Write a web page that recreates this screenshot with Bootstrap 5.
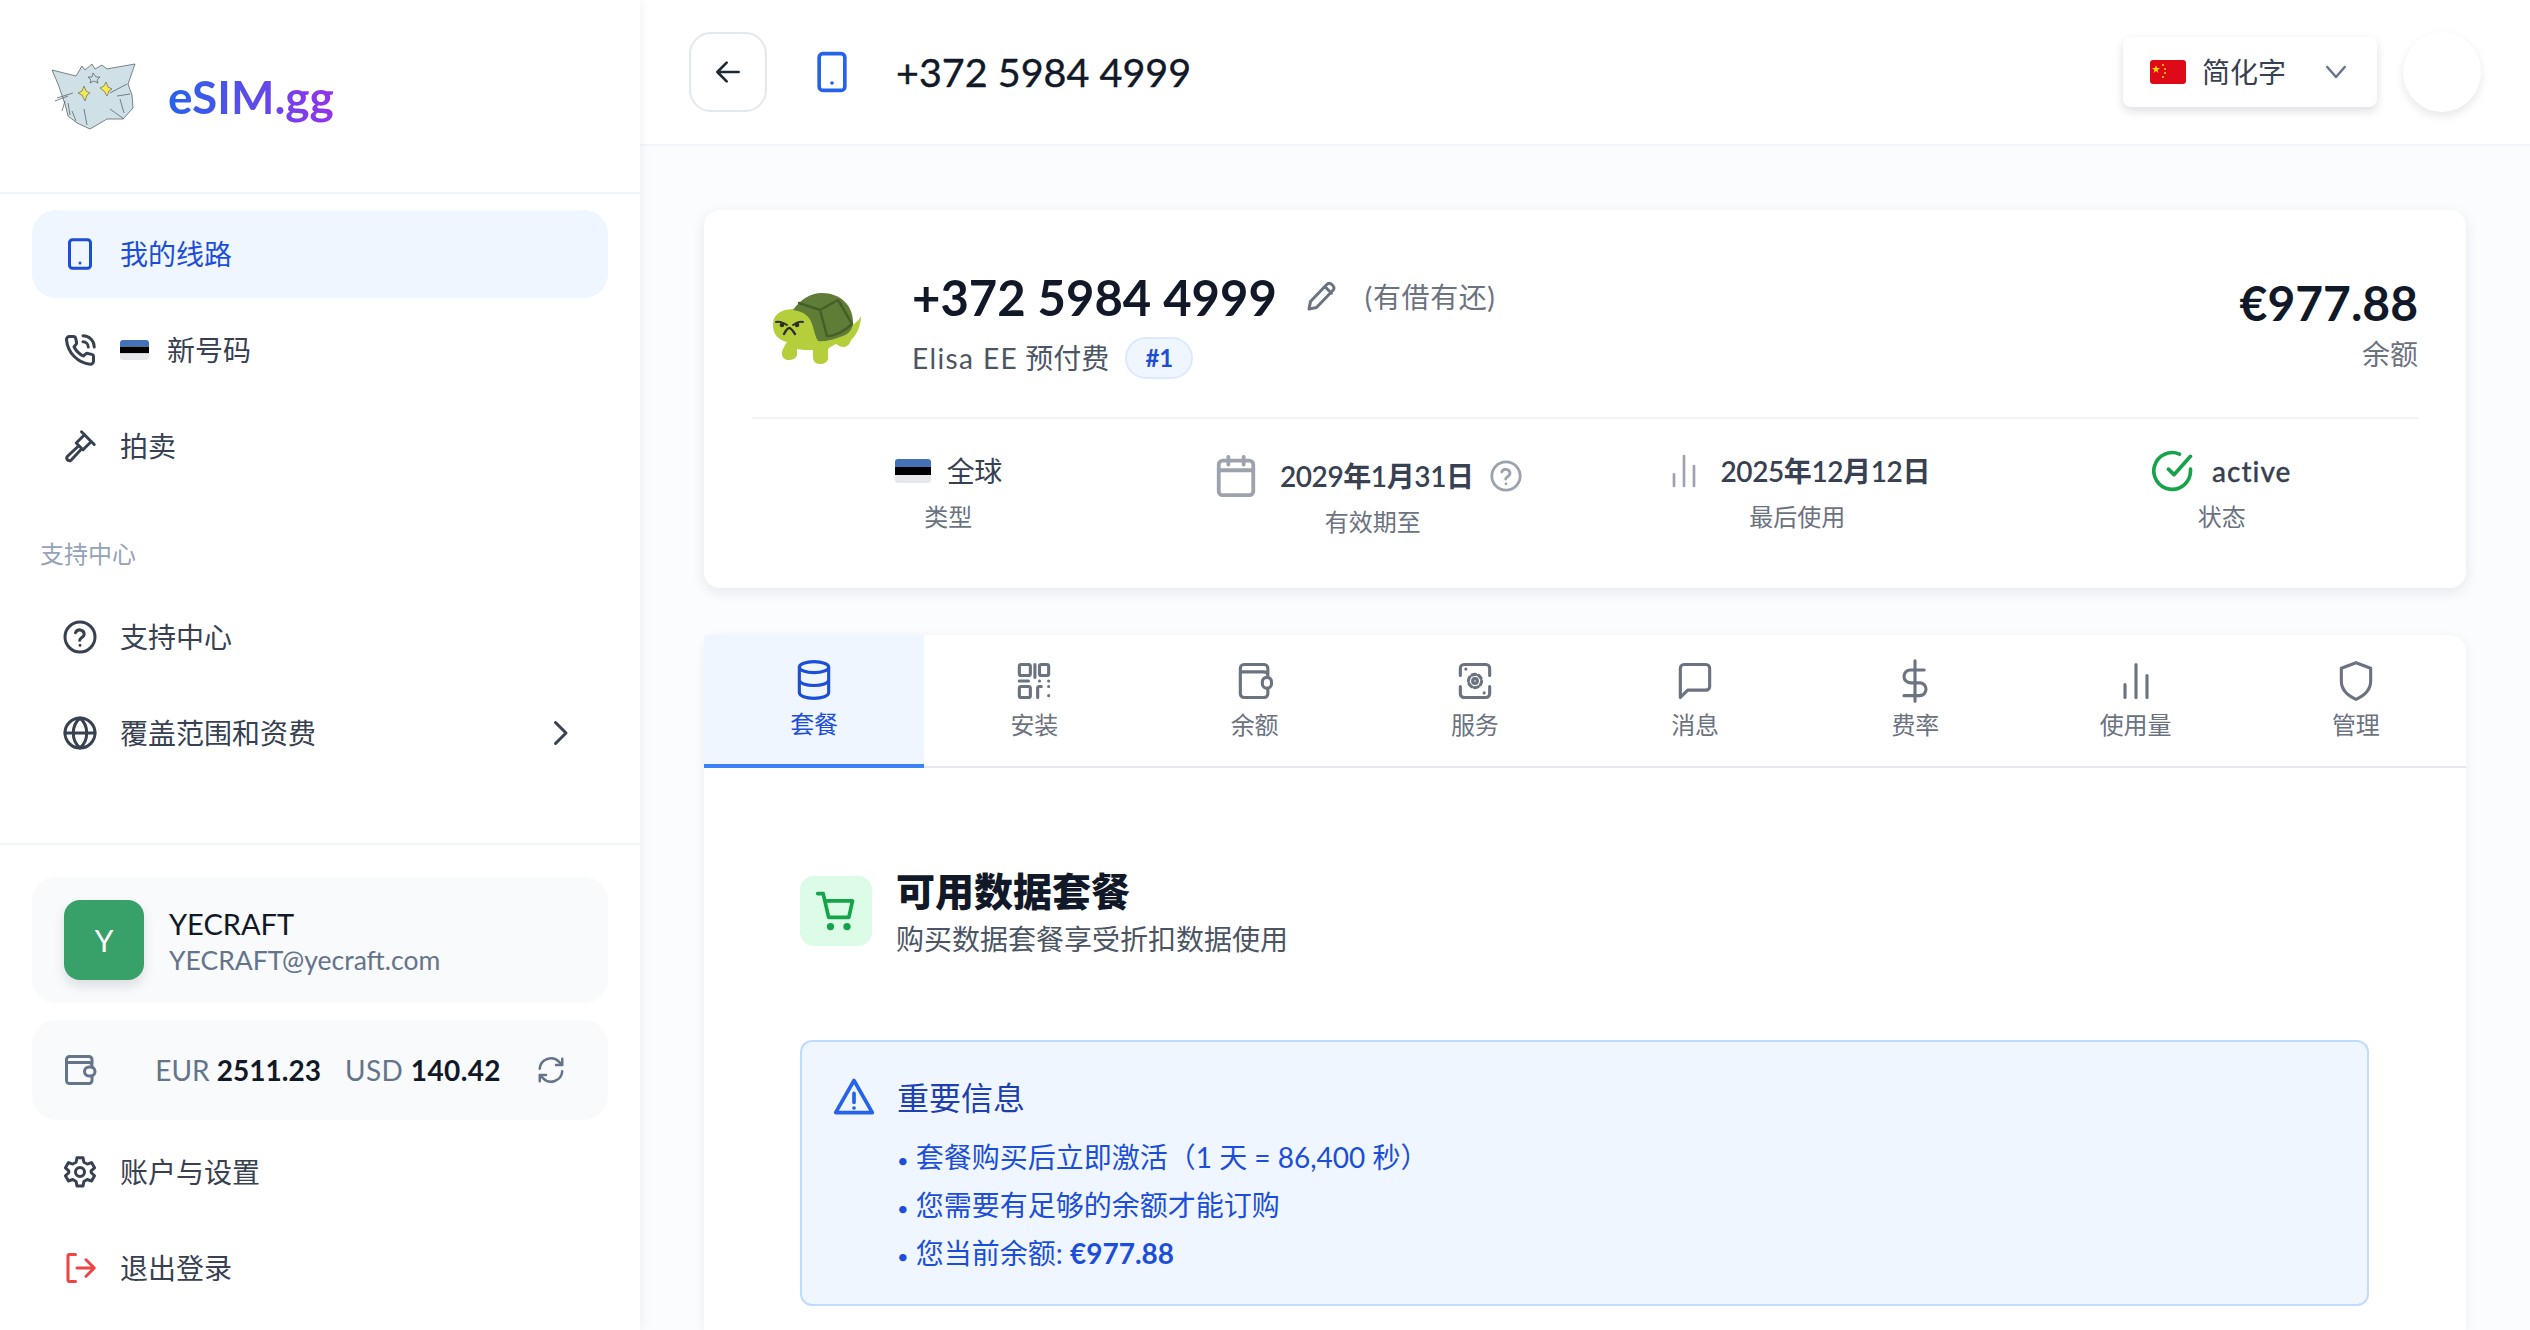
<!DOCTYPE html>
<html lang="zh-CN">
<head>
  <meta charset="UTF-8">
  <title>eSIM.gg</title>
  <link href="https://cdn.jsdelivr.net/npm/bootstrap@5.3.3/dist/css/bootstrap.min.css" rel="stylesheet">
  <style>
    html, body { height: 100%; }
    body {
      font-family: Lato, "Noto Sans CJK SC", sans-serif;
      background: #fbfcfe;
      color: #374151;
      font-size: 28px;
      overflow: hidden;
    }
    svg.ic { fill: none; stroke: currentColor; stroke-width: 2; stroke-linecap: round; stroke-linejoin: round; flex-shrink: 0; }
    .sidebar { width: 640px; height: 100%; background: #fff; box-shadow: 2px 0 10px rgba(15,23,42,.05); z-index: 2; }
    .logo-row { height: 192px; padding-left: 40px; gap: 18px; }
    .logo-text {
      font-size: 46px; font-weight: 700;
      background: linear-gradient(90deg, #2563eb, #9333ea);
      -webkit-background-clip: text; background-clip: text; color: transparent;
    }
    .side-rule { border-top: 2px solid #f1f5f9; }
    .side-nav { padding: 16px 32px 0; gap: 8px; }
    .side-item { height: 88px; padding: 0 30px; gap: 22px; border-radius: 24px; color: #374151; text-decoration: none; flex-shrink: 0; }
    .side-item.active { background: #eff6ff; color: #1d4ed8; }
    .side-item svg.ic { width: 36px; height: 36px; }
    .side-item .flag { width: 29px; height: 20px; }
    .new-no { margin-left: -4px; }
    .side-label { font-size: 24px; color: #94a3b8; padding: 0 8px; height: 60px; line-height: 60px; margin: 26px 0 1px; }
    .side-foot { padding: 32px 32px 18px; }
    .foot-card { background: #f8fafc; border-radius: 24px; }
    .user-card { height: 126px; padding: 0 32px; gap: 25px; margin-bottom: 17px; }
    .user-av { width: 80px; height: 80px; background: #38a169; color: #fff; border-radius: 16px; font-size: 30px; box-shadow: 0 6px 12px rgba(15,23,42,.12); }
    .user-text { margin-top: 4px; }
    .user-name { font-size: 29px; color: #111827; line-height: 36px; }
    .user-mail { font-size: 26.5px; color: #64748b; line-height: 36px; }
    .wallet-card { height: 100px; padding: 0 42px 0 30px; margin-bottom: 8px; font-size: 28px; color: #64748b; }
    .wallet-card b { color: #111827; font-weight: 700; }
    .wallet-usd { margin-left: 24px; letter-spacing: .4px; }
    .wallet-sync { margin-left: 35px; }
    .foot-gap { margin-bottom: 8px; }
    .topbar { height: 146px; background: #fff; border-bottom: 2px solid #f1f5f9; padding: 0 49px; }
    .back-btn { width: 78px; height: 80px; border: 2px solid #e2e8f0; border-radius: 22px; background: #fff; color: #1f2937; }
    .top-phone { margin-left: 43px; color: #2563eb; }
    .top-title { font-size: 39.5px; font-weight: 400; color: #111827; margin-left: 42px; -webkit-text-stroke: .4px #111827; }
    .lang-btn { width: 254px; height: 70px; background: #fff; border-radius: 8px; box-shadow: 0 4px 10px rgba(15,23,42,.14); padding: 0 26px 0 27px; }
    .flag { width: 36px; height: 24px; border-radius: 3px; flex-shrink: 0; }
    .top-av { width: 78px; height: 80px; border-radius: 50%; background: #fff; box-shadow: 0 4px 10px rgba(15,23,42,.1); margin-left: 26px; }
    .content { padding: 64px 64px 0; min-height: 0; overflow: hidden; }
    .line-card { border-radius: 16px; background: #fff; box-shadow: 0 4px 14px rgba(15,23,42,.09); height: 378px; padding: 0 48px; flex-shrink: 0; }
    .line-head { height: 209px; border-bottom: 2px solid #f3f4f6; }
    .turtle { margin: 70px 0 0 8px; flex-shrink: 0; }
    .line-main { padding: 57px 0 0 42px; }
    .line-no { font-size: 49px; font-weight: 700; color: #111827; line-height: 60px; }
    .muted-28 { color: #6b7280; font-size: 28px; }
    .note { margin-left: 26px; letter-spacing: .6px; }
    .carrier { color: #4b5563; }
    .carrier span { letter-spacing: 1.4px; }
    .num-badge { background: #eff6ff; border: 2px solid #dbeafe; color: #1d4ed8; font-size: 24px; font-weight: 700; border-radius: 22px; width: 68px; height: 42px; margin-left: 16px; }
    .bal { font-size: 48px; font-weight: 700; color: #111827; line-height: 60px; }
    .stat-row { --bs-gutter-x: 32px; padding-top: 28px; }
    .stat-top { height: 48px; gap: 16px; color: #374151; font-weight: 600; letter-spacing: -.4px; margin-bottom: 5px; }
    .stat-cap { font-size: 24px; color: #6b7280; line-height: 34px; }
    .stat-expiry { margin-top: 5px; gap: 12px; padding-right: 10px; }
    .stat-bars { stroke-width: 1.6 !important; }
    .stat-state { font-weight: 500; letter-spacing: 1px; -webkit-text-stroke: .3px #374151; }
    .tabs-card { margin-top: 47px; border-radius: 16px 16px 0 0; background: #fff; box-shadow: 0 2px 12px rgba(15,23,42,.06); }
    .tabs { border-bottom: 2px solid #e5e7eb; height: 133px; }
    .tab-it { flex: 1 1 0; color: #6b7280; font-size: 24px; padding-top: 24px; gap: 4px; }
    .tab-it svg.ic { width: 44px; height: 44px; stroke-width: 1.7; }
    .tab-it.active { background: #eff6ff; color: #1d4ed8; border-bottom: 4px solid #3b82f6; padding-top: 23px; margin-bottom: -2px; }
    .panel { padding: 100px 97px 23px 96px; }
    .plan-ic { width: 72px; height: 70px; background: #dcfce7; color: #16a34a; border-radius: 14px; margin-top: 8px; }
    .plan-title { font-size: 39px; font-weight: 800; color: #111827; line-height: 46px; }
    .plan-sub { font-size: 28px; color: #4b5563; line-height: 40px; margin-top: 5px; }
    .notice { margin-top: 81px; background: #eff6ff; border: 2px solid #bfdbfe; border-radius: 12px; height: 266px; padding: 36px 30px; gap: 21px; color: #1d4ed8; }
    .notice-title { font-size: 32px; color: #1e40af; line-height: 40px; margin-bottom: 15px; }
    .notice-line { line-height: 48px; height: 48px; }
    .notice-line i { font-style: normal; font-size: 20px; line-height: 1; }
    .notice-line b { font-weight: 700; }
  </style>
</head>
<body>
<div class="d-flex h-100">

  <aside class="sidebar d-flex flex-column flex-shrink-0">
    <div class="logo-row d-flex align-items-center">
      <svg width="110" height="90" viewBox="0 0 110 90">
        <path d="M12 19 L36 25 L42 15 L45 19 L52 13 L55 18 L62 14 L67 18 L72 17 L95 13 L88 33 L92 44 L93 57 L83 68 L67 68 L50 78 L37 72 L28 65 L25 53 L18 33 Z" fill="#cfe0e6" stroke="#5b6670" stroke-width=".8"/>
        <path d="M17 47 L33 42 M15 50 L28 45 M22 60 L25 50 M70 42 L87 33 M77 45 L90 43 M32 60 L36 70 M44 58 L47 74 M70 58 L84 68 M80 48 L84 62 M28 52 L30 64" stroke="#5b6670" stroke-width=".8" fill="none"/>
        <path d="M44 35 L46 40 L50 42 L47 44 L45 50 L42 44 L38 42 L42 40 Z M66 31 L68 36 L72 38 L69 40 L67 45 L64 40 L60 37 L64 35 Z" fill="#f5ea4d" stroke="#4b5563" stroke-width=".6"/>
        <path d="M53 22 L56 26 L60 26 L57 29 L58 32 L54 30 L50 32 L51 29 L48 26 L52 26 Z" fill="none" stroke="#5b6670" stroke-width=".8"/>
      </svg>
      <span class="logo-text">eSIM.gg</span>
    </div>
    <div class="side-rule"></div>

    <nav class="side-nav d-flex flex-column flex-grow-1">
      <a class="side-item active d-flex align-items-center" href="#">
        <svg class="ic" viewBox="0 0 24 24"><rect x="5" y="2.5" width="14" height="19" rx="2"/><path d="M12 18h.01"/></svg>
        我的线路
      </a>
      <a class="side-item d-flex align-items-center" href="#">
        <svg class="ic" viewBox="0 0 24 24"><path d="M21 16.900v2.600a2 2 0 0 1-2.200 2A18 18 0 0 1 3 5.200 2 2 0 0 1 5 3h2.600a1.500 1.500 0 0 1 1.500 1.200l.6 2.700a1.500 1.500 0 0 1-.4 1.400L8 9.800a14 14 0 0 0 6.200 6.200l1.500-1.300a1.500 1.500 0 0 1 1.400-.4l2.700.6a1.500 1.500 0 0 1 1.200 1.500z"/><path d="M14 2.500a7.500 7.500 0 0 1 7.500 7.500M14 6.500a3.500 3.500 0 0 1 3.500 3.500"/></svg>
        <svg class="flag" viewBox="0 0 36 24" preserveAspectRatio="none"><rect width="36" height="8" fill="#4472b8"/><rect y="8" width="36" height="8" fill="#000"/><rect y="16" width="36" height="8" fill="#e5e7eb"/></svg>
        <span class="new-no">新号码</span>
      </a>
      <a class="side-item d-flex align-items-center" href="#">
        <svg class="ic" viewBox="0 0 24 24"><path d="M13 2.500l8.500 8.500M15 4.500L9.500 10l4.500 4.500L19.500 9M11 12l-7.500 7a1.800 1.800 0 0 0 2.500 2.500l7-7.500"/></svg>
        拍卖
      </a>

      <div class="side-label">支持中心</div>
      <a class="side-item d-flex align-items-center" href="#">
        <svg class="ic" viewBox="0 0 24 24"><circle cx="12" cy="12" r="10"/><path d="M9 9.200a3 3 0 0 1 5.800 1c0 2-3 2.300-3 4M12 17.500h.01"/></svg>
        支持中心
      </a>
      <a class="side-item d-flex align-items-center" href="#">
        <svg class="ic" viewBox="0 0 24 24"><circle cx="12" cy="12" r="10"/><path d="M2 12h20M12 2c3.500 3 4.500 6.500 4.500 10s-1 7-4.500 10c-3.500-3-4.500-6.500-4.500-10s1-7 4.500-10z"/></svg>
        <span class="flex-grow-1">覆盖范围和资费</span>
        <svg class="ic" viewBox="0 0 24 24"><path d="M9 5l7 7-7 7"/></svg>
      </a>
    </nav>

    <div class="side-rule"></div>
    <div class="side-foot">
      <div class="foot-card user-card d-flex align-items-center">
        <div class="user-av d-flex align-items-center justify-content-center">Y</div>
        <div class="user-text">
          <div class="user-name">YECRAFT</div>
          <div class="user-mail">YECRAFT@yecraft.com</div>
        </div>
      </div>
      <div class="foot-card wallet-card d-flex align-items-center">
        <svg class="ic" width="36" height="36" viewBox="0 0 24 24"><path d="M20 8V5a2 2 0 0 0-2-2H5a2 2 0 0 0-2 2v14a2 2 0 0 0 2 2h13a2 2 0 0 0 2-2v-3M3 7h15a2 2 0 0 1 2 2v1"/><rect x="15" y="10" width="7" height="6" rx="3"/></svg>
        <span class="ms-auto">EUR <b>2511.23</b></span>
        <span class="wallet-usd">USD <b>140.42</b></span>
        <svg class="ic wallet-sync" width="30" height="30" viewBox="0 0 24 24"><path d="M3 11a9 9 0 0 1 15.500-5.500L21 8M21 3v5h-5M21 13a9 9 0 0 1-15.500 5.500L3 16M3 21v-5h5"/></svg>
      </div>
      <a class="side-item foot-gap d-flex align-items-center" href="#">
        <svg class="ic" viewBox="0 0 24 24"><circle cx="12" cy="12" r="3"/><path d="M10 2.500h4l.6 3 2.200 1.200 2.900-1 2 3.500-2.300 2 .1 1.300 2.200 2-2 3.500-2.900-1-2.200 1.300-.6 3h-4l-.6-3-2.200-1.300-2.900 1-2-3.500 2.200-2v-1.300L2.300 9.200l2-3.500 2.900 1 2.200-1.200z"/></svg>
        账户与设置
      </a>
      <a class="side-item d-flex align-items-center" href="#">
        <svg class="ic" viewBox="0 0 24 24" style="color:#ef4444"><path d="M9 3H5a1 1 0 0 0-1 1v16a1 1 0 0 0 1 1h4M10 12h11M16 6.500l5.500 5.500-5.500 5.500"/></svg>
        退出登录
      </a>
    </div>
  </aside>

  <div class="flex-grow-1 d-flex flex-column" style="min-width:0">
    <header class="topbar d-flex align-items-center flex-shrink-0">
      <div class="back-btn d-flex align-items-center justify-content-center">
        <svg class="ic" width="32" height="32" viewBox="0 0 24 24"><path d="M20 12H4M11 5l-7 7 7 7"/></svg>
      </div>
      <svg class="ic top-phone" width="44" height="44" viewBox="0 0 24 24"><rect x="5" y="2" width="14" height="20" rx="2"/><path d="M12 18h.01"/></svg>
      <div class="top-title">+372 5984 4999</div>
      <div class="ms-auto lang-btn d-flex align-items-center">
        <svg class="flag" viewBox="0 0 36 24"><rect width="36" height="24" fill="#de0a17"/><path d="M6 5l1 3 3 0-2.500 2 1 3L6 11l-2.500 2 1-3L2 8l3 0z" fill="#ffde00"/><circle cx="13" cy="5" r="1" fill="#ffde00"/><circle cx="15" cy="9" r="1" fill="#ffde00"/><circle cx="15" cy="13" r="1" fill="#ffde00"/><circle cx="13" cy="17" r="1" fill="#ffde00"/></svg>
        <span class="ms-3">简化字</span>
        <svg class="ic ms-auto" width="30" height="30" viewBox="0 0 24 24" style="color:#64748b"><path d="M5 8l7 8 7-8"/></svg>
      </div>
      <div class="top-av"></div>
    </header>

    <main class="content flex-grow-1 d-flex flex-column">
      <section class="line-card">
        <div class="line-head d-flex align-items-start justify-content-between">
          <svg class="turtle" width="110" height="95" viewBox="0 0 110 95">
            <path d="M13 45 C13 33 23 29 34 29 C44 29 50 36 55 46 L85 50 C92 46 98 42 101 36 C101 45 97 55 91 60 C90 64 87 67 84 67 C80 67 78 65 76 64 C72 66 68 68 68 70 L68 78 C68 82 64 84 60 84 C55 84 53 81 53 77 L53 70 C48 70 41 70 37 69 L37 74 C37 78 33 80 28 80 C24 80 21 76 22 72 C23 68 25 65 27 62 C18 60 13 54 13 45Z" fill="#b5cf3c"/>
            <path d="M33 30 C40 20 50 13 62 13 C80 13 93 25 93 42 C93 50 88 55 80 57 C72 60 64 62 58 61 C54 55 54 45 49 38 C45 33 40 31 33 30Z" fill="#5f7d36"/>
            <path d="M39 23 L60 30 L78 20 M60 30 L67 56 M78 20 L91 42 M67 56 C76 56 86 50 92 44" stroke="#445f28" stroke-width="2.500" fill="none" stroke-linecap="round"/>
            <path d="M16 42 C19 41 24 43 27 45 M43 42 C40 41 36 43 33 45" stroke="#2f2f22" stroke-width="2" fill="none" stroke-linecap="round"/>
            <circle cx="22" cy="45" r="2.300" fill="#2f2f22"/><circle cx="37" cy="45" r="2.300" fill="#2f2f22"/>
            <path d="M24 54 C26 50 28 48 29.500 48 C31 48 33 51 35 54" stroke="#2f2f22" stroke-width="2.400" fill="none" stroke-linecap="round"/>
          </svg>
          <div class="line-main flex-grow-1">
            <div class="d-flex align-items-center">
              <span class="line-no">+372 5984 4999</span>
              <svg class="ic" width="36" height="36" viewBox="0 0 24 24" style="color:#6b7280;margin-left:26px"><path d="M4 20l1-5L16 3.500a2 2 0 0 1 3 0l1 1a2 2 0 0 1 0 3L9 19zM14.500 5l4.500 4.500"/></svg>
              <span class="muted-28 note">(有借有还)</span>
            </div>
            <div class="d-flex align-items-center" style="margin-top:10px">
              <div class="carrier"><span>Elisa EE</span> 预付费</div>
              <span class="num-badge d-flex align-items-center justify-content-center">#1</span>
            </div>
          </div>
          <div class="text-end" style="padding-top:63px">
            <div class="bal">€977.88</div>
            <div class="muted-28">余额</div>
          </div>
        </div>
        <div class="row stat-row text-center">
          <div class="col-3">
            <div class="stat-top d-flex align-items-center justify-content-center" style="font-weight:400">
              <svg class="flag" viewBox="0 0 36 24"><rect width="36" height="8" fill="#4472b8"/><rect y="8" width="36" height="8" fill="#000"/><rect y="16" width="36" height="8" fill="#e5e7eb"/></svg>
              全球
            </div>
            <div class="stat-cap">类型</div>
          </div>
          <div class="col-3">
            <div class="stat-top stat-expiry d-flex align-items-center justify-content-center">
              <svg class="ic" width="46" height="46" viewBox="0 0 24 24" style="color:#9ca3af;margin-right:9px"><rect x="3" y="4" width="18" height="18" rx="2"/><path d="M3 9h18M8 2v4M16 2v4"/></svg>
              <span>2029年1月31日</span>
              <svg class="ic" width="34" height="34" viewBox="0 0 24 24" style="color:#9ca3af;margin-left:3px"><circle cx="12" cy="12" r="10"/><path d="M9 9.200a3 3 0 0 1 5.800 1c0 2-3 2.300-3 4M12 17.500h.01"/></svg>
            </div>
            <div class="stat-cap" style="margin-top:5px">有效期至</div>
          </div>
          <div class="col-3">
            <div class="stat-top d-flex align-items-center justify-content-center">
              <svg class="ic stat-bars" width="40" height="40" viewBox="0 0 24 24" style="color:#9ca3af"><path d="M6 21v-7M12 21V3M18 21v-12"/></svg>
              <span>2025年12月12日</span>
            </div>
            <div class="stat-cap">最后使用</div>
          </div>
          <div class="col-3">
            <div class="stat-top d-flex align-items-center justify-content-center">
              <svg class="ic" width="44" height="44" viewBox="0 0 24 24" style="color:#16a34a"><path d="M21 11v1a10 10 0 1 1-6-9.200M21 4l-9 10-3-3"/></svg>
              <span class="stat-state">active</span>
            </div>
            <div class="stat-cap">状态</div>
          </div>
        </div>
      </section>

      <section class="tabs-card flex-grow-1">
        <div class="tabs d-flex">
          <div class="tab-it active d-flex flex-column align-items-center">
            <svg class="ic" viewBox="0 0 24 24"><ellipse cx="12" cy="5" rx="8" ry="3"/><path d="M4 5v14c0 1.700 3.600 3 8 3s8-1.300 8-3V5M4 12c0 1.700 3.600 3 8 3s8-1.300 8-3"/></svg>
            套餐
          </div>
          <div class="tab-it d-flex flex-column align-items-center">
            <svg class="ic" viewBox="0 0 24 24"><rect x="4" y="3" width="6" height="6" rx="1"/><rect x="4" y="15" width="6" height="6" rx="1"/><rect x="15" y="3" width="5" height="6" rx="1"/><path d="M12.500 3v7M4 12h5M15 12h.01M20 12h.01M14 21v-5a1 1 0 0 1 1-1h1M20 15h.01M20 20h.01"/></svg>
            安装
          </div>
          <div class="tab-it d-flex flex-column align-items-center">
            <svg class="ic" viewBox="0 0 24 24"><path d="M19 8V5a2 2 0 0 0-2-2H6a2 2 0 0 0-2 2v14a2 2 0 0 0 2 2h11a2 2 0 0 0 2-2v-3M4 7h13a2 2 0 0 1 2 2v1"/><rect x="16" y="10" width="5" height="6" rx="2.500"/></svg>
            余额
          </div>
          <div class="tab-it d-flex flex-column align-items-center">
            <svg class="ic" viewBox="0 0 24 24"><path d="M4 9V5a2 2 0 0 1 2-2h12a2 2 0 0 1 2 2v4M4 15v4a2 2 0 0 0 2 2h12a2 2 0 0 0 2-2v-4"/><circle cx="12" cy="12" r="1.300"/><circle cx="12" cy="12" r="3.600" stroke-dasharray="2.200 1.570"/><path d="M7 5.500h.01M17 18.500h.01"/></svg>
            服务
          </div>
          <div class="tab-it d-flex flex-column align-items-center">
            <svg class="ic" viewBox="0 0 24 24"><path d="M4 21V5a2 2 0 0 1 2-2h12a2 2 0 0 1 2 2v10a2 2 0 0 1-2 2H8z"/></svg>
            消息
          </div>
          <div class="tab-it d-flex flex-column align-items-center">
            <svg class="ic" viewBox="0 0 24 24"><path d="M12 1v22M17 6H9.500a3.500 3.500 0 0 0 0 7h5a3.500 3.500 0 0 1 0 7H6"/></svg>
            费率
          </div>
          <div class="tab-it d-flex flex-column align-items-center">
            <svg class="ic" viewBox="0 0 24 24"><path d="M6 21v-7M12 21V3M18 21v-12"/></svg>
            使用量
          </div>
          <div class="tab-it d-flex flex-column align-items-center">
            <svg class="ic" viewBox="0 0 24 24"><path d="M12 2l8 3v7c0 5-3.500 8-8 10-4.500-2-8-5-8-10V5z"/></svg>
            管理
          </div>
        </div>
        <div class="panel">
          <div class="d-flex align-items-start">
            <div class="plan-ic d-flex align-items-center justify-content-center">
              <svg class="ic" width="44" height="44" viewBox="0 0 24 24"><circle cx="9" cy="20.500" r="1" fill="currentColor"/><circle cx="18" cy="20.500" r="1" fill="currentColor"/><path d="M2 2.500h3l3 13h11l2-9H6"/></svg>
            </div>
            <div style="margin-left:24px">
              <div class="plan-title">可用数据套餐</div>
              <div class="plan-sub">购买数据套餐享受折扣数据使用</div>
            </div>
          </div>
          <div class="notice d-flex">
            <svg class="ic" width="44" height="44" viewBox="0 0 24 24" style="color:#2563eb;margin-top:-3px"><path d="M12 3L22 20.500H2zM12 10v5M12 18h.01"/></svg>
            <div>
              <div class="notice-title">重要信息</div>
              <div class="notice-line"><i>•</i> 套餐购买后立即激活（1 天 = 86,400 秒）</div>
              <div class="notice-line"><i>•</i> 您需要有足够的余额才能订购</div>
              <div class="notice-line"><i>•</i> 您当前余额: <b>€977.88</b></div>
            </div>
          </div>
        </div>
      </section>
    </main>
  </div>
</div>
<script src="https://cdn.jsdelivr.net/npm/bootstrap@5.3.3/dist/js/bootstrap.bundle.min.js"></script>
</body>
</html>
